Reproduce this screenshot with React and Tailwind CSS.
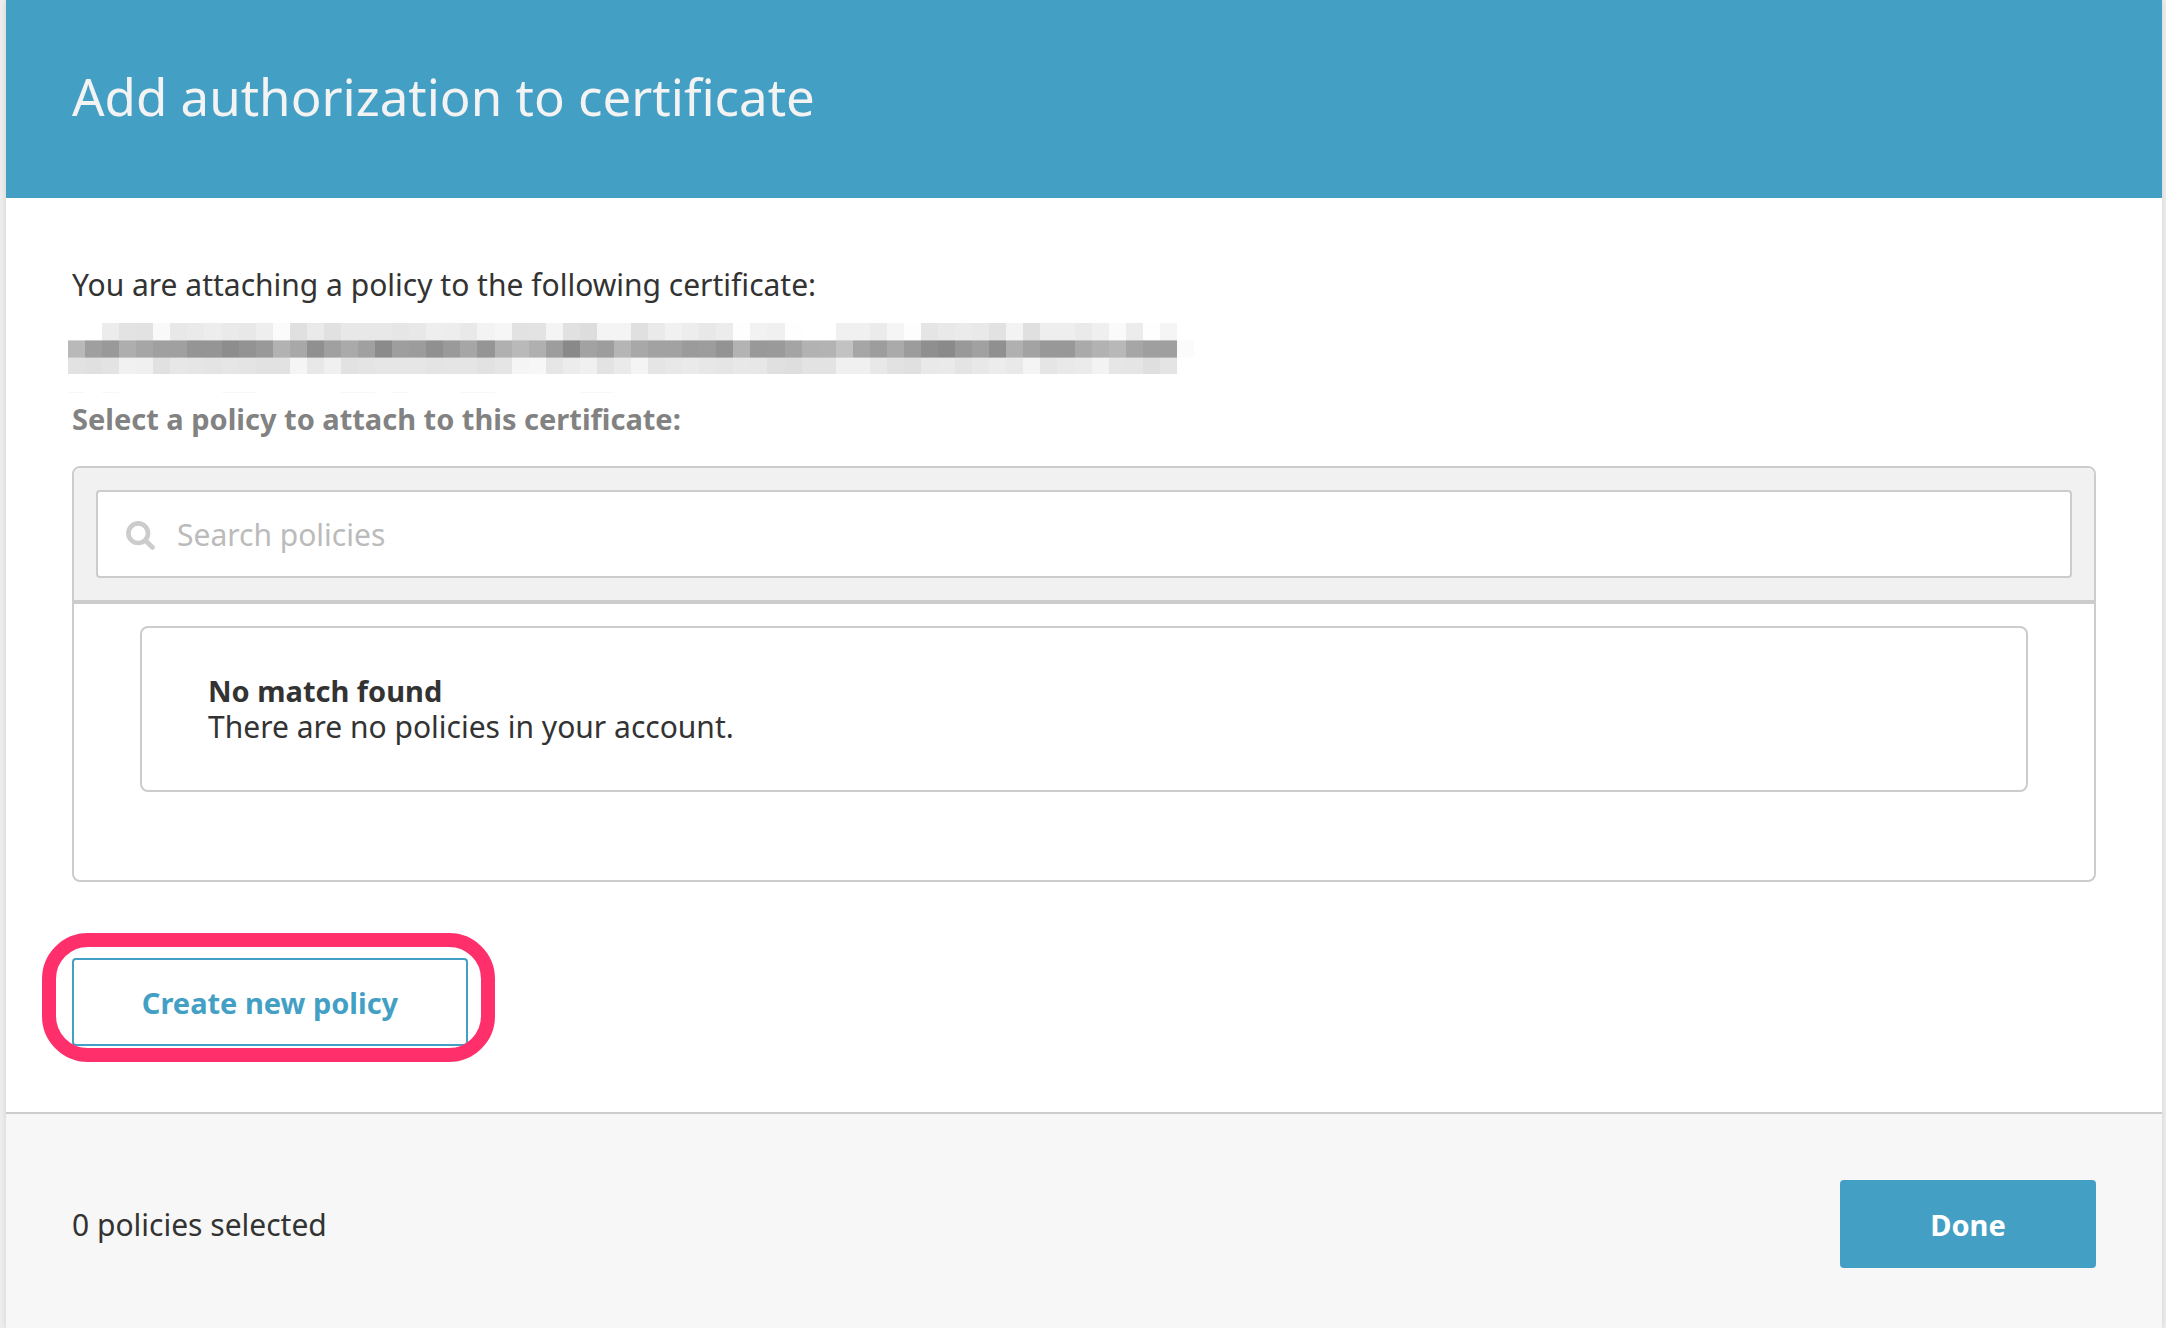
import React from "react";

const CELL = 17.06;

// Two hex digits per cell: the grey level of each block in the redacted certificate ID.
const TOP =
  "ffffece3e2f9e8eaedeae8eefbe0eae1e8e8e8e6e8eeede9f3f6e2e3f4e1ddf4f4e0eaf1ede8ecfef2f0fefffff0f0ebf5fde5e9ebe9e2f3e0eeeeeaeffaecfef5ff";
const MIDDLE =
  "b99f99aea6a0a095958d9399b2a890a0aaa08b9e9c909aa695b0b9b09d89a29db5a8a2a29b9d93b3999aa4b2b3c2a69daa9c8f8a99a190b0a39898aab2b8a69f9ffb";
const BOTTOM =
  "e2e0e3f1f0e1e7e6e4e6e4e2e2f5e8f0e2e4e6e6e6e4e5e5e2e5f5f7e6ecf0e3eaf4e5e8eae7e5e8e7e0dee3e3f0f0e8e2e0e9eae4e8ece9f4e5e9ebf3e6e5dfe4ff";

const shades = (row) => row.match(/../g).map((v) => `#${v}${v}${v}`);
const FAINT = [0, 2, 9, 10, 16, 17, 19, 23, 24, 30, 31];

function RedactedId() {
  return (
    <svg
      viewBox="0 0 1126 70"
      className="mt-5 -ml-1 block h-[70px] w-[1126px] max-w-full"
      role="img"
      aria-label="Redacted certificate ID"
      shapeRendering="crispEdges"
    >
      {shades(TOP).map((fill, i) => (
        <rect key={i} x={i * CELL} y="0" width={CELL} height="18" fill={fill} />
      ))}
      {shades(BOTTOM).map((fill, i) => (
        <rect key={i} x={i * CELL} y="34" width={CELL} height="17" fill={fill} />
      ))}
      {shades(MIDDLE).map((fill, i) => (
        <g key={i} fill={fill}>
          <rect x={i * CELL} y="17" width={CELL} height="18" opacity="0.6" />
          <rect x={i * CELL} y="18" width={CELL} height="16" />
        </g>
      ))}
      {FAINT.map((i) => (
        <rect key={i} x={i * CELL} y="69" width={CELL} height="1" fill="#f8f8f8" />
      ))}
    </svg>
  );
}

function SearchIcon() {
  return (
    <svg viewBox="0 0 29 29" className="size-[29px] shrink-0" fill="none" stroke="#cccccc" aria-hidden="true">
      <circle cx="12.2" cy="12.2" r="9.8" strokeWidth="4.6" />
      <path d="M19.5 19.5 L26.4 26.4" strokeWidth="4.8" strokeLinecap="round" />
    </svg>
  );
}

export default function App() {
  return (
    <div className="min-h-screen bg-[#eeeeee] pr-1 pl-1.5 font-['Noto_Sans',sans-serif] text-[30px] leading-9 text-[#333333]">
      <div className="flex min-h-screen flex-col bg-white shadow-[0_0_6px_rgba(0,0,0,0.12)]">
        <header className="bg-[#449fc5] px-[66px] pt-[66px] pb-[72px]">
          <h1 className="text-[51px] leading-[60px] text-[#f3f3f3]">Add authorization to certificate</h1>
        </header>

        <main className="px-[66px] pt-[69px] pb-[66px]">
          <p>You are attaching a policy to the following certificate:</p>
          <RedactedId />
          <h2 className="mt-2 text-[29px] leading-9 font-bold text-[#828282]">
            Select a policy to attach to this certificate:
          </h2>

          <section className="mt-[29px] overflow-hidden rounded-lg border-2 border-[#cccccc]">
            <div className="border-b-4 border-[#cccccc] bg-[#f1f1f1] px-[22px] py-[22px]">
              <label className="flex h-[88px] items-center gap-[22px] rounded-sm border-2 border-[#cccccc] bg-white px-7 pt-0.5">
                <SearchIcon />
                <input
                  type="text"
                  aria-label="Search policies"
                  placeholder="Search policies"
                  className="min-w-0 flex-1 bg-transparent outline-none placeholder:text-[#bbbbbb]"
                />
              </label>
            </div>
            <div className="px-[66px] pt-[22px] pb-[88px]">
              <div className="rounded-lg border-2 border-[#cccccc] px-[66px] py-[45px]">
                <p className="text-[29px] leading-9 font-bold">No match found</p>
                <p>There are no policies in your account.</p>
              </div>
            </div>
          </section>

          <div className="mt-[76px] flex">
            <div className="relative">
              <button
                type="button"
                className="h-[88px] w-[396px] rounded-sm border-2 border-[#449fc5] bg-white pt-0.5 text-[29px] leading-9 font-bold text-[#449fc5]"
              >
                Create new policy
              </button>
              <div className="pointer-events-none absolute -top-[25px] -right-[27px] -bottom-[16px] -left-[30px] rounded-[46px] border-[14px] border-[#ff2f6c]" />
            </div>
          </div>
        </main>

        <footer className="flex flex-1 items-start justify-between border-t-2 border-[#cccccc] bg-[#f7f7f7] px-[66px] pt-[66px] pb-[60px]">
          <p className="pt-[27px]">0 policies selected</p>
          <button
            type="button"
            className="h-[88px] w-64 rounded-sm bg-[#449fc5] pt-0.5 text-[29px] leading-9 font-bold text-white"
          >
            Done
          </button>
        </footer>
      </div>
    </div>
  );
}
